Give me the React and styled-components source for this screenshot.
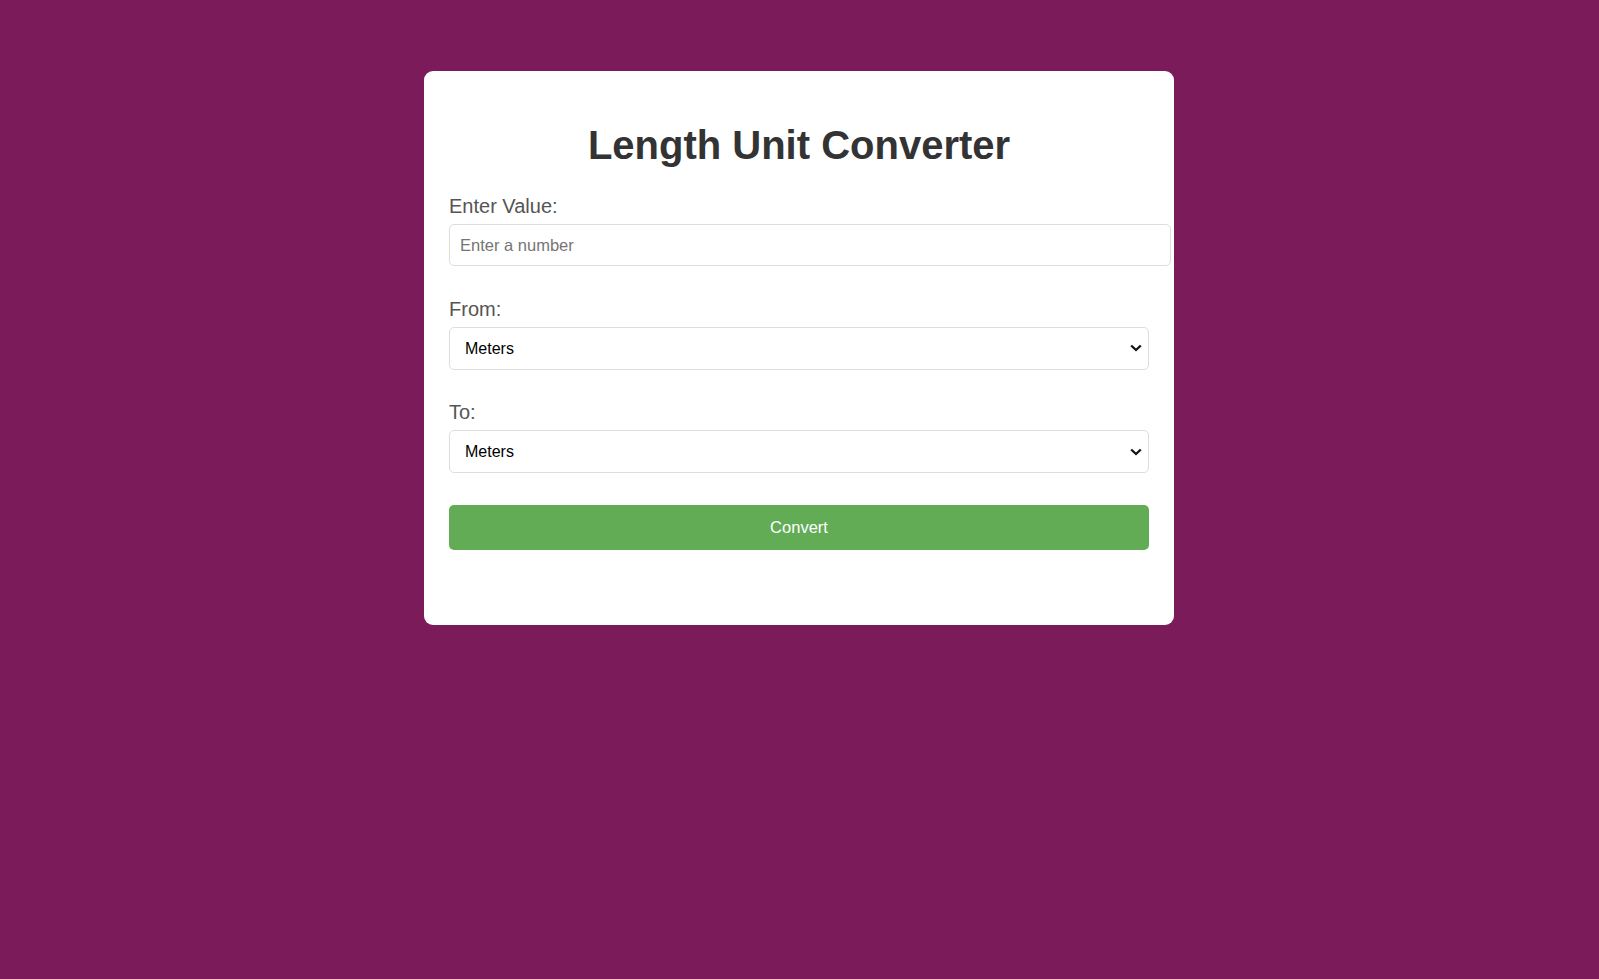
import React, { useState } from 'react';
import styled, { createGlobalStyle } from 'styled-components';

const GlobalStyle = createGlobalStyle`
  html, body {
    margin: 0;
    padding: 0;
  }
  body {
    background: #7b1b5a;
    font-family: "Liberation Sans", Arial, sans-serif;
  }
`;

const Page = styled.div`
  min-height: 979px;
  padding: 71px 1px 0 0;
  box-sizing: border-box;
  display: flex;
  justify-content: center;
  align-items: flex-start;
`;

const Card = styled.div`
  width: 700px;
  padding: 25px 25px 75px;
  background: #fff;
  border-radius: 9px;
`;

const Title = styled.h1`
  margin: 26px 0 27px;
  text-align: center;
  font-size: 40px;
  font-weight: bold;
  color: #333;
  line-height: 46px;
`;

const Field = styled.div`
  display: flex;
  flex-direction: column;
  align-items: flex-start;
  margin-bottom: 31.5px;
`;

const Label = styled.label`
  font-size: 20px;
  line-height: 23px;
  color: #555;
  margin-bottom: 6px;
`;

const Input = styled.input`
  width: 100%;
  padding: 10px;
  font-size: 16.5px;
  line-height: 20px;
  font-family: inherit;
  border: 1px solid #ddd;
  border-radius: 5px;
  outline: none;
  &::placeholder {
    color: #757575;
  }
`;

const SelectBox = styled.div`
  position: relative;
  width: 100%;
`;

const Select = styled.select`
  width: 100%;
  height: 43px;
  box-sizing: border-box;
  padding: 0 15px;
  font-size: 16px;
  font-family: inherit;
  color: #000;
  background: #fff;
  border: 1px solid #ddd;
  border-radius: 5px;
  outline: none;
  appearance: none;
  -webkit-appearance: none;
`;

const Chevron = styled.svg`
  position: absolute;
  right: 7px;
  top: 50%;
  width: 12px;
  height: 8px;
  margin-top: -4px;
  pointer-events: none;
`;

const Button = styled.button`
  display: block;
  width: 100%;
  padding: 13px;
  font-size: 16.5px;
  line-height: 19px;
  font-family: inherit;
  color: #fff;
  background: #62ac56;
  border: none;
  border-radius: 5px;
  cursor: pointer;
`;

const units = ['Meters', 'Kilometers', 'Centimeters', 'Millimeters', 'Miles', 'Yards', 'Feet', 'Inches'];

const UnitSelect = ({ id, value, onChange }) => (
  <SelectBox>
    <Select id={id} value={value} onChange={e => onChange(e.target.value)}>
      {units.map(u => (
        <option key={u}>{u}</option>
      ))}
    </Select>
    <Chevron viewBox="0 0 12 8">
      <path d="M1.2 1.5 L6 6 L10.8 1.5" fill="none" stroke="#111" strokeWidth="2.2" />
    </Chevron>
  </SelectBox>
);

const App = () => {
  const [value, setValue] = useState('');
  const [from, setFrom] = useState('Meters');
  const [to, setTo] = useState('Meters');

  return (
    <Page>
      <GlobalStyle />
      <Card>
        <Title>Length Unit Converter</Title>
        <Field>
          <Label htmlFor="value">Enter Value:</Label>
          <Input
            id="value"
            type="number"
            placeholder="Enter a number"
            value={value}
            onChange={e => setValue(e.target.value)}
          />
        </Field>
        <Field>
          <Label htmlFor="from">From:</Label>
          <UnitSelect id="from" value={from} onChange={setFrom} />
        </Field>
        <Field>
          <Label htmlFor="to">To:</Label>
          <UnitSelect id="to" value={to} onChange={setTo} />
        </Field>
        <Button>Convert</Button>
      </Card>
    </Page>
  );
};

export default App;
